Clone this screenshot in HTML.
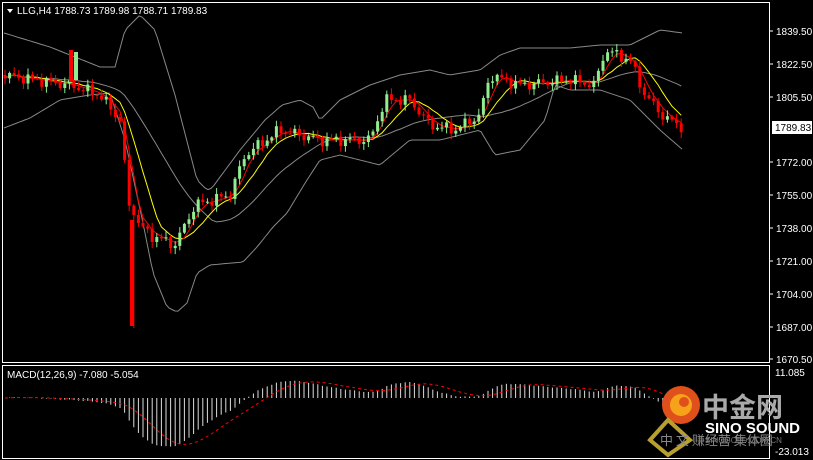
<!DOCTYPE html>
<html><head><meta charset="utf-8"><style>
body{margin:0;background:#000;width:813px;height:460px;overflow:hidden;font-family:"Liberation Sans",sans-serif}
svg{display:block}
</style></head><body>
<svg id="s" width="813" height="460" xmlns="http://www.w3.org/2000/svg" font-family="Liberation Sans, sans-serif">
<rect width="813" height="460" fill="#000"/>
<rect x="2.5" y="2.5" width="767" height="360" fill="none" stroke="#fff"/>
<rect x="2.5" y="365.5" width="767" height="93" fill="none" stroke="#fff"/>
<g id="bands"></g><g id="cand"></g><g id="macd"></g>
<rect x="69" y="50" width="4" height="32" fill="#ff0000"/>
<rect x="74" y="52" width="4" height="28" fill="#90ee90"/>
<rect x="130" y="220" width="4" height="106" fill="#ff0000"/>
<g fill="#fff" font-size="10">
<polygon points="7,9 13,9 10,13"/>
<text x="17" y="14">LLG,H4  1788.73 1789.98 1788.71 1789.83</text>
<text x="7" y="378">MACD(12,26,9) -7.080 -5.054</text>
</g>
<g id="axis" fill="#fff" font-size="10"></g>
<rect x="772" y="121" width="40" height="13" fill="#fff"/>
<text x="775" y="131" font-size="10" fill="#000">1789.83</text>
<text x="775" y="376" font-size="10" fill="#fff">11.085</text>
<text x="775" y="455" font-size="10" fill="#fff">-23.013</text>
<g>
<circle cx="681" cy="405" r="19" fill="#e0501a"/>
<circle cx="681" cy="405" r="11" fill="#f7a21b"/>
<circle cx="684" cy="402" r="5" fill="#e0501a"/>
<polygon points="650,440 668,420 690,440 668,455" fill="none" stroke="#b8a030" stroke-width="4"/>
<text x="702" y="417" font-size="27" fill="#aaa" font-family="Noto Sans CJK SC, sans-serif" font-weight="bold">中金网</text>
<text x="705" y="433" font-size="15" fill="#fff" font-weight="bold">SINO SOUND</text>
<text x="705" y="443" font-size="8" fill="#777">SINOGOLD.COM.CN</text>
<text x="660" y="445" font-size="13" fill="#888" font-family="Noto Sans CJK SC, sans-serif">中 文 赚经营 集体圈</text>
</g>
</svg>
<script>
(function(){
var NS="http://www.w3.org/2000/svg";
function el(p,t,a){var e=document.createElementNS(NS,t);for(var k in a)e.setAttribute(k,a[k]);p.appendChild(e);return e;}
function interp(pts,x){for(var i=0;i<pts.length-1;i++){if(x<=pts[i+1][0]){var a=pts[i],b=pts[i+1];return a[1]+(b[1]-a[1])*(x-a[0])/(b[0]-a[0]);}}return pts[pts.length-1][1];}
function path(pts){var d="";for(var x=pts[0][0];x<=pts[pts.length-1][0];x+=3)d+=(d?"L":"M")+x+","+interp(pts,x).toFixed(1);return d;}
var up=[[4,33],[50,47],[100,67],[115,67],[125,30],[140,15],[155,30],[175,95],[197,180],[207,190],[212,188],[240,150],[265,120],[282,105],[300,100],[313,107],[320,120],[340,100],[370,85],[400,75],[430,70],[450,75],[480,70],[500,55],[520,48],[570,48],[600,45],[630,45],[660,30],[683,33]];
var lo=[[4,128],[30,118],[60,100],[90,95],[110,93],[125,140],[143,223],[153,273],[167,307],[177,312],[187,303],[197,273],[210,265],[243,262],[257,247],[273,227],[287,213],[307,180],[320,160],[340,155],[380,165],[410,140],[440,140],[480,130],[495,155],[520,150],[545,120],[555,85],[570,90],[600,90],[630,100],[660,130],[683,150]];
var B=document.getElementById("bands");
el(B,"path",{d:path(up),stroke:"#888",fill:"none"});
el(B,"path",{d:path(lo),stroke:"#888",fill:"none"});
var cl=[[4,75],[70,85],[100,95],[120,120],[130,215],[150,235],[175,245],[195,205],[230,195],[245,155],[280,130],[320,140],[370,140],[385,100],[410,100],[430,125],[455,130],[480,115],[490,75],[520,85],[570,80],[595,85],[605,50],[630,60],[645,95],[665,118],[683,127]];
var C=document.getElementById("cand"),closes=[],xs=[];
var prev=75;
for(var x=5;x<=683;x+=4.6){
 var c=interp(cl,x)+Math.sin(x*1.7)*4+Math.sin(x*0.63)*2.5;
 if(Math.abs(x-133)<3)c=215;
 var o=prev;prev=c;xs.push(x);closes.push(c);
 var hi=Math.min(o,c)-1-Math.abs(Math.sin(x*2.3))*5,lw=Math.max(o,c)+1+Math.abs(Math.cos(x*1.9))*5;
 if(Math.abs(x-133)<3){lw=328;}
 var col=c<o?"#90ee90":"#ff0000";
 el(C,"line",{x1:x,x2:x,y1:hi,y2:lw,stroke:col});
 el(C,"rect",{x:x-1.5,y:Math.min(o,c),width:3,height:Math.max(1,Math.abs(c-o)),fill:col});
}
function ema(a,n){var k=2/(n+1),r=[a[0]];for(var i=1;i<a.length;i++)r.push(a[i]*k+r[i-1]*(1-k));return r;}
function sma(a,n){var r=[];for(var i=0;i<a.length;i++){var s=0,m=0;for(var j=Math.max(0,i-n+1);j<=i;j++){s+=a[j];m++;}r.push(s/m);}return r;}
function pl(a,col,dash){var d="";for(var i=0;i<a.length;i++)d+=(i?"L":"M")+xs[i].toFixed(1)+","+a[i].toFixed(1);var e=el(B,"path",{d:d,stroke:col,fill:"none"});if(dash)e.setAttribute("stroke-dasharray",dash);}
pl(sma(closes,20),"#888");pl(sma(closes,8),"#ffff00");pl(sma(closes,4),"#ff0000");
var pr=closes.map(function(y){return -y/1.941;});
var e12=ema(pr,12),e26=ema(pr,26),m=e12.map(function(v,i){return v-e26[i];}),sg=sma(m,9);
var M=document.getElementById("macd"),z=398,sc=2.26;
for(var i=0;i<m.length;i++)el(M,"line",{x1:xs[i],x2:xs[i],y1:z,y2:Math.max(368,Math.min(456,z-m[i]*sc)),stroke:"#ddd"});
var d="";for(var i=0;i<sg.length;i++)d+=(i?"L":"M")+xs[i].toFixed(1)+","+Math.max(368,Math.min(456,z-sg[i]*sc)).toFixed(1);
el(M,"path",{d:d,stroke:"#ff0000",fill:"none","stroke-dasharray":"3,3"});
var A=document.getElementById("axis");
[["1839.50",31],["1822.50",64],["1805.50",97],["1772.00",162],["1755.00",195],["1738.00",228],["1721.00",261],["1704.00",294],["1687.00",327],["1670.50",359]].forEach(function(t){
 el(A,"line",{x1:770,x2:773,y1:t[1],y2:t[1],stroke:"#fff"});
 var e=el(A,"text",{x:776,y:t[1]+4});e.textContent=t[0];});
})();
</script>
</body></html>
